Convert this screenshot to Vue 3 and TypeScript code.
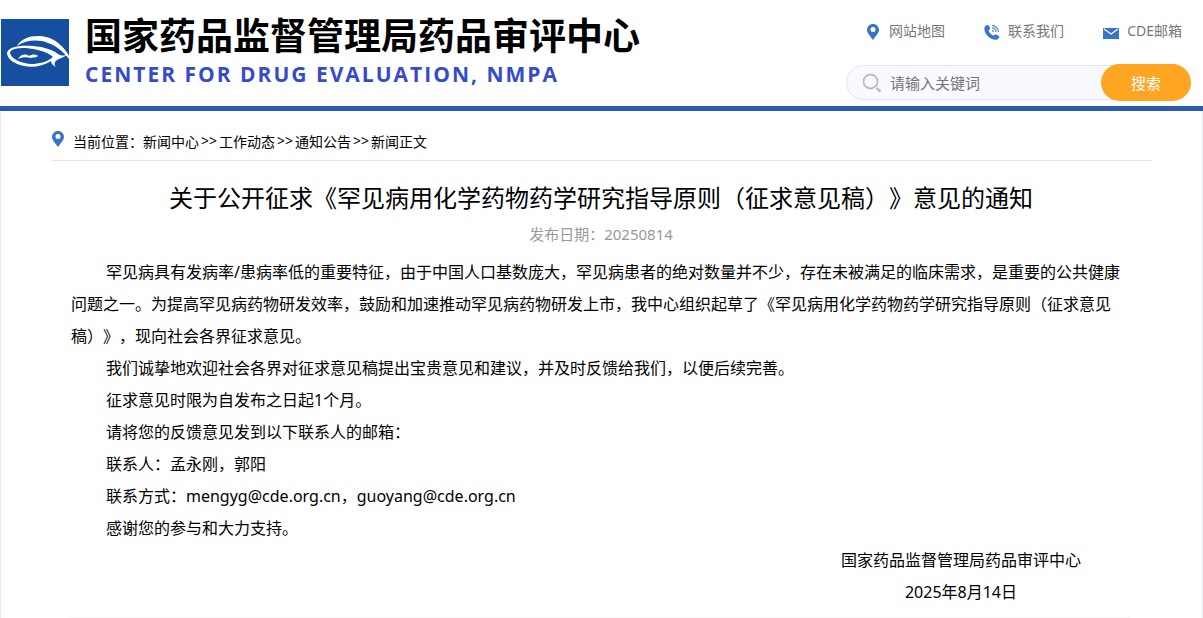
<script setup lang="ts">
import { ref } from 'vue'

const keyword = ref('')
const crumbs: string[] = ['新闻中心', '工作动态', '通知公告', '新闻正文']
const paragraphs: string[] = [
  '罕见病具有发病率/患病率低的重要特征，由于中国人口基数庞大，罕见病患者的绝对数量并不少，存在未被满足的临床需求，是重要的公共健康问题之一。为提高罕见病药物研发效率，鼓励和加速推动罕见病药物研发上市，我中心组织起草了《罕见病用化学药物药学研究指导原则（征求意见稿）》，现向社会各界征求意见。',
  '我们诚挚地欢迎社会各界对征求意见稿提出宝贵意见和建议，并及时反馈给我们，以便后续完善。',
  '征求意见时限为自发布之日起1个月。',
  '请将您的反馈意见发到以下联系人的邮箱：',
  '联系人：孟永刚，郭阳',
  '联系方式：mengyg@cde.org.cn，guoyang@cde.org.cn',
  '感谢您的参与和大力支持。',
]
</script>

<template>
  <div class="page">
    <header class="header">
      <div class="brand">
        <svg class="logo" viewBox="0 0 72 68" aria-hidden="true">
          <rect x="0" y="0" width="68" height="67" fill="#164f9f" />
          <path d="M16 27C20 20 28 17 37 17C52 17 65 27 72 45C64 34 56 27 47 24C37 20 25 21 16 27Z" fill="#fff" />
          <path fill-rule="evenodd" d="M6 34C7 28 18 26 32 27C44 28 52 31 57 35C60 37 63 37 67 35C64 38 59 39 56 41C53 43 53 46 55 48C51 46 50 44 50 42C42 47 32 49 23 47C12 45 6 39 6 34ZM9 34C10 39 18 44 30 45C38 45 46 43 52 38C46 32 34 30 25 29C16 29 9 30 9 34Z" fill="#fff" />
          <path d="M17 40C19 36 24 34 28 37C31 35 35 35 37 37C35 39 32 38 30 39C26 38 21 38 17 40Z" fill="#fff" />
        </svg>
        <div class="names">
          <div class="name">国家药品监督管理局药品审评中心</div>
          <div class="name-en">CENTER FOR DRUG EVALUATION, NMPA</div>
        </div>
      </div>
      <div class="tools">
        <nav class="links">
          <a href="#map">
            <svg viewBox="0 0 16 16" aria-hidden="true"><path fill-rule="evenodd" d="M8 0C4.500 0 2 2.700 2 6C2 9 5 11.500 8 16C11 11.500 14 9 14 6C14 2.700 11.500 0 8 0ZM8 3A2.500 2.500 0 1 1 8 8A2.500 2.500 0 1 1 8 3Z" fill="#3974c9" /></svg>
            <span>网站地图</span>
          </a>
          <a href="#contact">
            <svg viewBox="0 0 16 16" aria-hidden="true"><path d="M1 2L3.500 1C5 1 6.500 4 6 5L4.500 6.500C5.500 9 7 10.500 9.500 11.500L11 10.500C12 10 15.500 12 15.500 13L13.500 15.500C7 17 -2 9 1 2Z" fill="#3974c9" /><path d="M8 1.500C11.500 1.500 14.500 4.500 14.500 8M8 4C10.500 4 12 5.500 12 8M8 6.500Q9.500 6.500 9.500 8" fill="none" stroke="#6c98d6" stroke-width="1.300" /></svg>
            <span>联系我们</span>
          </a>
          <a href="#mail">
            <svg viewBox="0 0 16 16" aria-hidden="true"><rect y="4" width="16" height="11" fill="#3974c9" /><path d="M1 5L8 10L15 5" fill="none" stroke="#fff" stroke-width="1.300" /></svg>
            <span>CDE邮箱</span>
          </a>
        </nav>
        <form class="search" @submit.prevent>
          <svg viewBox="0 0 20 20" aria-hidden="true"><circle cx="8.500" cy="8.500" r="7" fill="none" stroke="#bbb" stroke-width="1.800" /><path d="M14.500 15L18.500 18.500" stroke="#bbb" stroke-width="2.400" /></svg>
          <input v-model="keyword" type="text" placeholder="请输入关键词" aria-label="请输入关键词" />
          <button type="submit">搜索</button>
        </form>
      </div>
    </header>
    <main class="content">
      <nav class="crumbs">
        <svg viewBox="0 0 12 16" aria-hidden="true"><path fill-rule="evenodd" d="M6 0C2.500 0 0 2.700 0 6C0 9 3 11.500 6 16C9 11.500 12 9 12 6C12 2.700 9.500 0 6 0ZM6 3A2.500 2.500 0 1 1 6 8A2.500 2.500 0 1 1 6 3Z" fill="#3974c9" /></svg>
        <span>当前位置：</span>
        <template v-for="(crumb, i) in crumbs" :key="crumb">
          <span v-if="i > 0" class="sep">&gt;&gt;</span>
          <a href="#news">{{ crumb }}</a>
        </template>
      </nav>
      <article class="article">
        <h1>关于公开征求《罕见病用化学药物药学研究指导原则（征求意见稿）》意见的通知</h1>
        <div class="date">发布日期：20250814</div>
        <div class="body">
          <p v-for="text in paragraphs" :key="text">{{ text }}</p>
          <div class="signature">
            <div>国家药品监督管理局药品审评中心</div>
            <div>2025年8月14日</div>
          </div>
        </div>
        <div class="rule"></div>
      </article>
    </main>
  </div>
</template>

<style>
body {
  margin: 0;
  overflow: hidden auto;
  background: #fff;
}
</style>

<style scoped>
.page {
  font-family: "Noto Sans", "Noto Sans CJK SC", sans-serif;
  font-size: 16px;
  color: #000;
  text-spacing-trim: space-all;
}
.page * {
  box-sizing: border-box;
}
a {
  color: inherit;
  text-decoration: none;
}
.header {
  display: flex;
  justify-content: space-between;
  height: 111px;
  border-bottom: 5px solid #2a5caa;
}
.brand {
  display: flex;
  padding: 19px 0 0 1px;
}
.logo {
  width: 72px;
  height: 68px;
}
.names {
  margin: -6px 0 0 12px;
  white-space: nowrap;
}
.name {
  font-size: 37px;
  line-height: 46px;
  font-weight: 700;
}
.name-en {
  font-family: "Open Sans", sans-serif;
  font-size: 21px;
  line-height: 30px;
  font-weight: 700;
  letter-spacing: 2px;
  color: #364bcb;
}
.tools {
  width: 345px;
  margin-right: 12px;
}
.links {
  display: flex;
  justify-content: space-between;
  padding: 21px 9px 0 19px;
  font-size: 14px;
  line-height: 20px;
  color: #777;
}
.links a {
  display: flex;
  gap: 8px;
}
.links svg {
  width: 16px;
  height: 16px;
  margin-top: 3px;
}
.search {
  display: flex;
  align-items: center;
  height: 35px;
  margin-top: 24px;
  padding-left: 15px;
  border: 1px solid #e4e5e9;
  border-radius: 18px;
  background: #f9faff;
}
.search svg {
  flex: none;
  width: 20px;
  height: 20px;
}
.search input {
  flex: 1;
  min-width: 0;
  height: 30px;
  margin-left: 8px;
  padding: 0;
  border: 0;
  outline: 0;
  background: transparent;
  font: inherit;
  font-size: 15px;
}
.search input::placeholder {
  color: #757575;
}
.search button {
  flex: none;
  width: 90px;
  height: 37px;
  margin-right: -1px;
  padding: 0;
  border: 0;
  border-radius: 19px;
  background: #ffa522;
  color: #fff;
  font: inherit;
  font-size: 15px;
}
.content {
  padding: 0 51px 0 50px;
  border-left: 1px solid #e4ecfc;
  border-right: 1px solid #e4ecfc;
}
.crumbs {
  display: flex;
  align-items: center;
  height: 50px;
  padding-top: 10px;
  border-bottom: 1px solid #e5e5e5;
  font-size: 14px;
}
.crumbs svg {
  width: 14px;
  height: 16px;
  margin: 0 8px 4px 0;
}
.sep {
  padding: 0 2px;
}
.article {
  padding: 17px 20px 0;
}
h1 {
  margin: 0;
  font-size: 24px;
  line-height: 40px;
  font-weight: 400;
  text-align: center;
}
.date {
  font-size: 15px;
  line-height: 32px;
  text-align: center;
  color: #999;
}
.body {
  padding-top: 6px;
  line-height: 32px;
}
.body p {
  margin: 0;
  text-indent: 35px;
}
.signature {
  width: max-content;
  margin: 0 50px 0 auto;
  text-align: center;
}
.rule {
  height: 1px;
  margin-top: 9px;
  background: #f7f7f7;
}
</style>
